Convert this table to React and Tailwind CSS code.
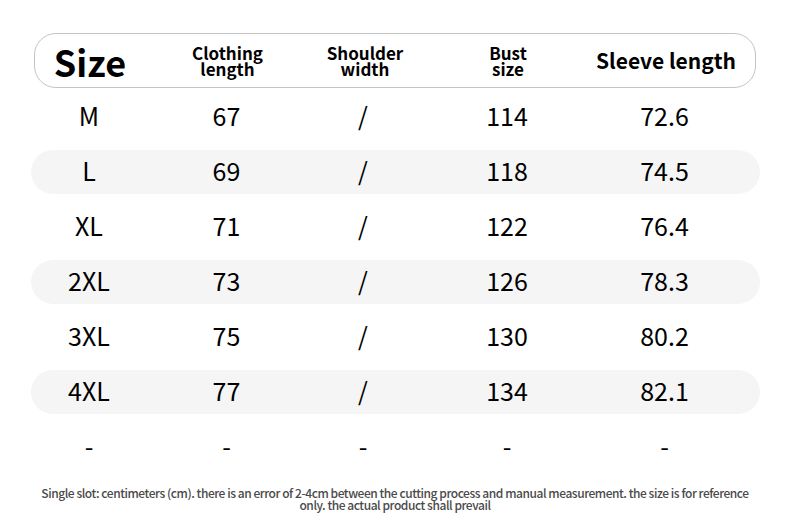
export default function App() {
  const rows = [
    ["M", "67", "/", "114", "72.6"],
    ["L", "69", "/", "118", "74.5"],
    ["XL", "71", "/", "122", "76.4"],
    ["2XL", "73", "/", "126", "78.3"],
    ["3XL", "75", "/", "130", "80.2"],
    ["4XL", "77", "/", "134", "82.1"],
    ["-", "-", "-", "-", "-"],
  ];
  const font = { fontFamily: '"Noto Sans CJK SC", "Noto Sans", sans-serif' };
  return (
    <div className="w-[790px] h-[525px] bg-white text-black overflow-hidden" style={font}>
      <div className="pt-[33px]">
        <div className="ml-[34px] w-[722px] h-[55px] rounded-[22px] border-[1.5px] border-[#c4c4c4] grid grid-cols-[110px_165px_110px_176px_139px] items-center">
          <div className="text-center text-[36px] font-bold leading-none">Size</div>
          <div className="text-center text-[17px] font-bold leading-[16px] pt-[1px]">Clothing<br />length</div>
          <div className="text-center text-[17px] font-bold leading-[16px] pt-[1px]">Shoulder<br />width</div>
          <div className="text-center text-[17px] font-bold leading-[16px] pt-[1px]">Bust<br />size</div>
          <div className="text-center text-[21px] font-bold leading-none whitespace-nowrap">Sleeve length</div>
        </div>
        <div className="mt-[7px] flex flex-col gap-[11px]">
          {rows.map((r, i) => (
            <div
              key={i}
              className={
                "ml-[31px] w-[729px] h-[44px] pb-[4px] rounded-[22px] grid grid-cols-[116px_159px_114px_174px_141px] items-center text-[25px] font-normal " +
                (i % 2 === 1 ? "bg-[#f5f5f5]" : "bg-white")
              }
            >
              {r.map((c, j) => (
                <div key={j} className="text-center leading-none">{c}</div>
              ))}
            </div>
          ))}
        </div>
        <div className="mt-[18px] px-[32px] text-center text-[12px] leading-[12px] font-medium text-[#4a4a4a] tracking-[-0.45px]">
          Single slot: centimeters (cm). there is an error of 2-4cm between the cutting process and manual measurement. the size is for reference only. the actual product shall prevail
        </div>
      </div>
    </div>
  );
}
